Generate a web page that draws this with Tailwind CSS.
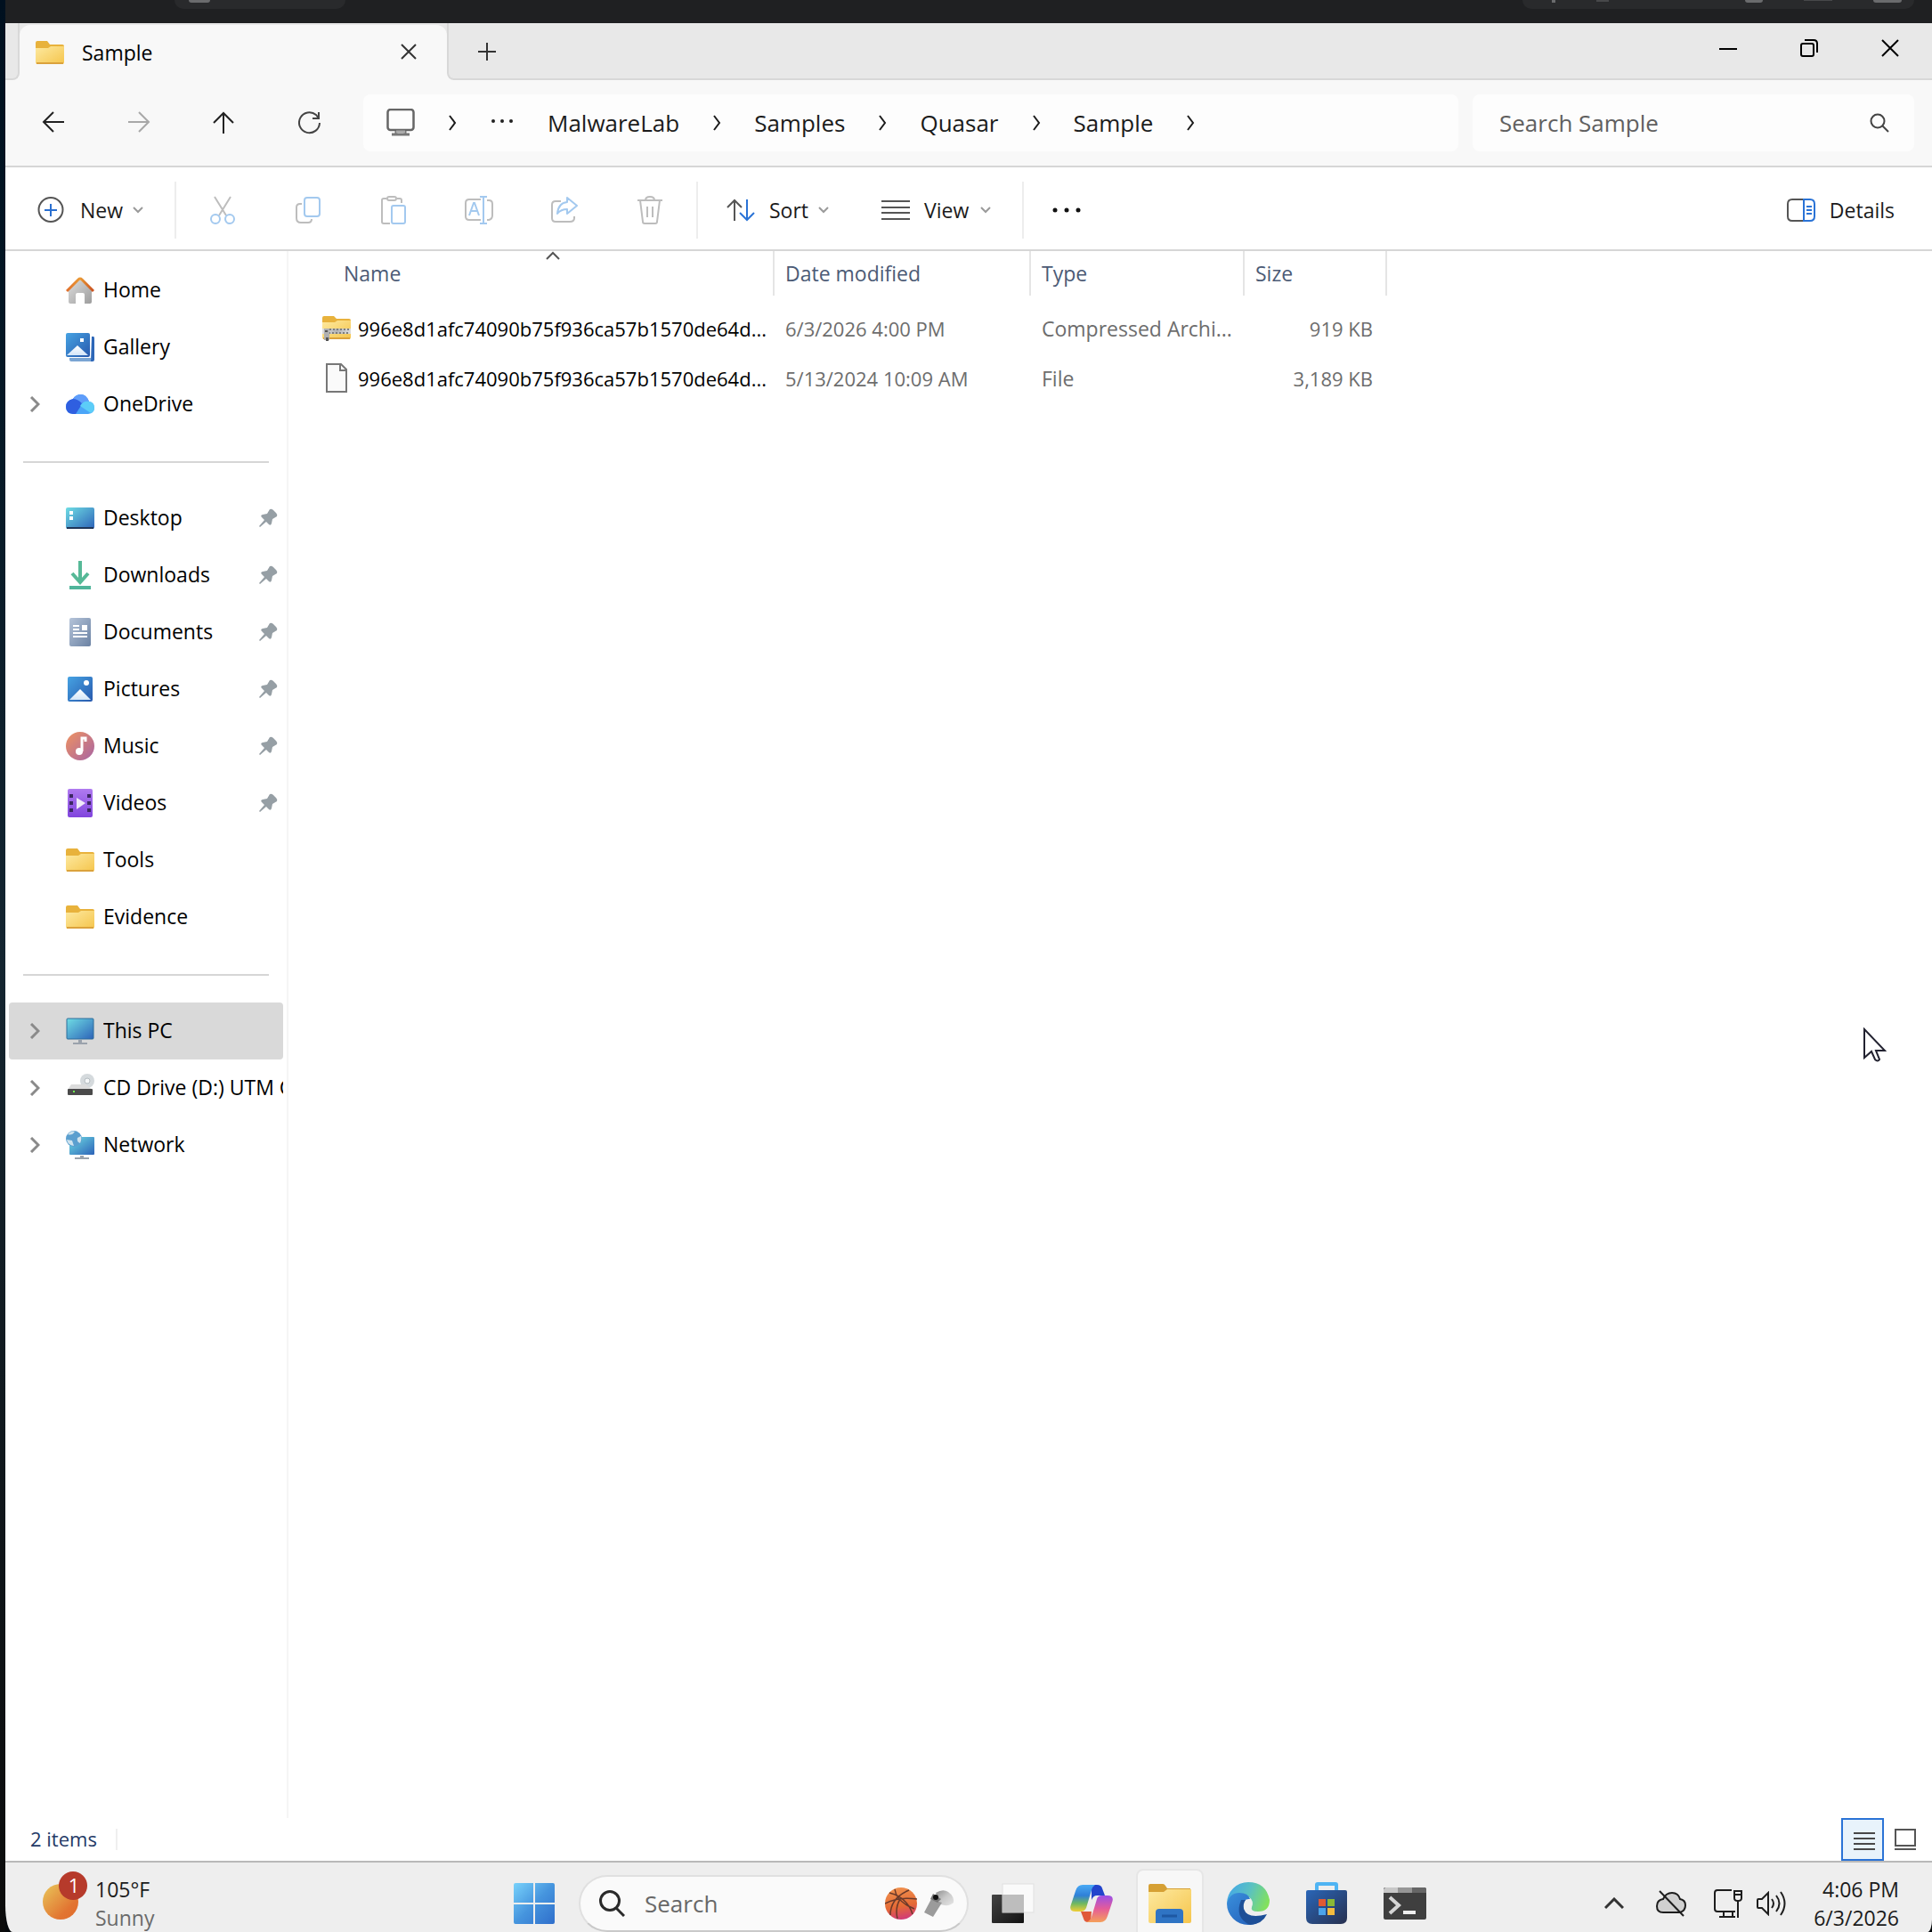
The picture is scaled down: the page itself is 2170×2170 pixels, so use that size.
<!DOCTYPE html>
<html lang="en">
<head>
<meta charset="utf-8">
<meta name="viewport" content="width=device-width, initial-scale=1">
<title>Sample - File Explorer</title>
<script src="https://cdn.jsdelivr.net/npm/@tailwindcss/browser@4"></script>
</head>
<body class="flex h-screen w-full overflow-hidden bg-[#05080b] font-['Open_Sans','Noto_Sans',sans-serif] text-[23px] leading-8 text-black">

<!-- Shared gradients and symbols -->
<svg class="absolute size-0" aria-hidden="true">
  <defs>
    <linearGradient id="gFolder" x1="0" y1="0" x2="1" y2="1"><stop offset="0" stop-color="#fde9a0"/><stop offset="1" stop-color="#f5c54c"/></linearGradient>
    <linearGradient id="gBlue" x1="0" y1="0" x2="1" y2="1"><stop offset="0" stop-color="#46a3e3"/><stop offset="1" stop-color="#2859ad"/></linearGradient>
    <linearGradient id="gTeal" x1="0" y1="0" x2="1" y2="1"><stop offset="0" stop-color="#6fdde4"/><stop offset="1" stop-color="#2d63b8"/></linearGradient>
    <linearGradient id="gGreen" x1="0" y1="0" x2="1" y2="1"><stop offset="0" stop-color="#6fd195"/><stop offset="1" stop-color="#3a9c9e"/></linearGradient>
    <linearGradient id="gDoc" x1="0" y1="0" x2="1" y2="1"><stop offset="0" stop-color="#b5c4d9"/><stop offset="1" stop-color="#6b82a3"/></linearGradient>
    <linearGradient id="gMusic" x1="0" y1="0" x2="1" y2="1"><stop offset="0" stop-color="#ef9360"/><stop offset="1" stop-color="#a764a4"/></linearGradient>
    <linearGradient id="gVideo" x1="0" y1="0" x2="0" y2="1"><stop offset="0" stop-color="#b07bf0"/><stop offset="1" stop-color="#8044dd"/></linearGradient>
    <linearGradient id="gHome" x1="0" y1="0" x2="1" y2="1"><stop offset="0" stop-color="#dedede"/><stop offset="1" stop-color="#9d9d9d"/></linearGradient>
    <linearGradient id="gRoof" x1="0" y1="0" x2="1" y2="0"><stop offset="0" stop-color="#e06f2b"/><stop offset=".5" stop-color="#ea9a35"/><stop offset="1" stop-color="#c94f1f"/></linearGradient>
    <linearGradient id="gHill" x1="0" y1="0" x2="0" y2="1"><stop offset="0" stop-color="#fff"/><stop offset="1" stop-color="#d4e6f8"/></linearGradient>
    <linearGradient id="gStart" gradientUnits="userSpaceOnUse" x1="0" y1="0" x2="46" y2="46"><stop offset="0" stop-color="#78d2fb"/><stop offset=".5" stop-color="#4695de"/><stop offset="1" stop-color="#2f6ecb"/></linearGradient>
    <linearGradient id="gSun" x1="0" y1="0" x2="1" y2="1"><stop offset="0" stop-color="#e9c75a"/><stop offset=".7" stop-color="#e27532"/><stop offset="1" stop-color="#e06a2b"/></linearGradient>
    <linearGradient id="gSilver" x1="0" y1="0" x2="1" y2="0"><stop offset="0" stop-color="#e0e0e0"/><stop offset=".5" stop-color="#b4b4b4"/><stop offset="1" stop-color="#dcdcdc"/></linearGradient>
  </defs>
  <symbol id="chev" viewBox="0 0 10 18"><path d="M2 1l6 8-6 8" fill="none" stroke="currentColor" stroke-width="2"/></symbol>
  <symbol id="expand" viewBox="0 0 12 18"><path d="M2 1l8 8-8 8" fill="none" stroke="currentColor" stroke-width="3"/></symbol>
  <symbol id="down" viewBox="0 0 14 10"><path d="M2 2l5 5 5-5" fill="none" stroke="#9a9a9a" stroke-width="2"/></symbol>
  <symbol id="folder" viewBox="0 0 32 26"><path d="M0 2q0-2 2-2h11l3 4h14q2 0 2 2v8H0z" fill="#e8b23c"/><path d="M0 8h14l3-2h15v18q0 2-2 2H2q-2 0-2-2z" fill="url(#gFolder)"/><path d="M1 25h30" stroke="#dba23c" stroke-width="2"/></symbol>
  <symbol id="pin" viewBox="0 0 22 22"><path d="M13 1q2-1 4 1l3 3q2 2 1 4l-5 3-1 5q-1 3-3 1l-3-3-7 6-1-1 6-7-3-3q-2-2 1-3l5-1z" fill="#969fa5"/></symbol>
  <symbol id="rows" viewBox="0 0 24 22"><path d="M0 2h24M0 8h24M0 14h24M0 20h24" stroke="#484848" stroke-width="2"/></symbol>
</svg>

<div class="w-[6px] shrink-0 bg-linear-to-b from-[#00101f] via-[#142530] to-[#0b0b0b]"></div>

<div class="flex min-w-0 flex-1 flex-col">

  <!-- Browser chrome behind the window -->
  <div class="flex h-[26px] shrink-0 items-start justify-between bg-[#1f2022] pr-5 pl-[190px]">
    <div class="h-[10px] w-[192px] rounded-b-xl bg-[#292a2c] pl-[16px]"><div class="h-[3px] w-[24px] rounded-b-full bg-[#6a6b6d]"></div></div>
    <div class="flex h-[10px] w-[440px] justify-between rounded-b-xl bg-[#292a2c] pr-[14px] pl-[33px]">
      <i class="h-[3px] w-[4px] bg-[#6a6b6d]"></i><i class="h-[2px] w-[14px] bg-[#47484a]"></i><i class="w-[60px]"></i><i class="h-[3px] w-[20px] rounded-b-full bg-[#6a6b6d]"></i><i class="h-px w-[32px] bg-[#47484a]"></i><i class="h-[3px] w-[32px] rounded-b bg-[#6a6b6d]"></i>
    </div>
  </div>

  <!-- Tab strip -->
  <header class="flex h-[64px] shrink-0 bg-[#f8f8f8]">
    <div class="w-[16px] rounded-br-lg border-r-2 border-b-2 border-[#d8d8d8] bg-[#e8e8e8]"></div>
    <div class="w-[480px] bg-[#e8e8e8]">
      <div class="mt-[2px] flex h-[62px] items-center rounded-t-xl bg-[#f8f8f8] pr-[33px] pl-[18px]">
        <svg class="h-[26px] w-[32px]"><use href="#folder"/></svg>
        <span class="ml-5 flex-1">Sample</span>
        <button aria-label="Close tab"><svg class="size-[20px]" viewBox="0 0 20 20"><path d="M2 1l16 16M18 1L2 17" stroke="#333" stroke-width="2"/></svg></button>
      </div>
    </div>
    <div class="flex flex-1 items-center rounded-bl-lg border-b-2 border-l-2 border-[#d8d8d8] bg-[#e8e8e8] pt-[2px]">
      <button class="ml-[32px]" aria-label="New tab"><svg class="size-[22px]" viewBox="0 0 22 22"><path d="M11 1v20M1 11h20" stroke="#333" stroke-width="2"/></svg></button>
      <div class="mr-[2px] ml-auto flex h-[52px] self-start text-black">
        <button class="grid w-[91px] place-items-center" aria-label="Minimize"><svg class="size-[20px]" viewBox="0 0 20 20"><path d="M0 11h20" stroke="currentColor" stroke-width="2"/></svg></button>
        <button class="grid w-[91px] place-items-center" aria-label="Restore"><svg class="size-[20px]" viewBox="0 0 20 20" fill="none" stroke="currentColor" stroke-width="2"><rect x="1" y="5" width="14" height="14" rx="2"/><path d="M5 1h10q4 0 4 4v10"/></svg></button>
        <button class="grid w-[91px] place-items-center" aria-label="Close"><svg class="size-[20px]" viewBox="0 0 20 20"><path d="M1 1l18 18M19 1L1 19" stroke="currentColor" stroke-width="2"/></svg></button>
      </div>
    </div>
  </header>

  <!-- Navigation and address -->
  <nav class="flex h-[98px] shrink-0 items-center border-b-2 border-[#d6d6d6] bg-[#f8f8f8] pr-5 pl-[6px] text-[26px] text-[#1b1b1b]">
    <button class="grid h-16 w-24 place-items-center" aria-label="Back"><svg class="size-[26px]" viewBox="0 0 26 26" fill="none" stroke="#222" stroke-width="2"><path d="M25 12H2M13 1L2 12l11 11"/></svg></button>
    <button class="grid h-16 w-24 place-items-center" aria-label="Forward"><svg class="size-[26px]" viewBox="0 0 26 26" fill="none" stroke="#a8a8a8" stroke-width="2"><path d="M1 12h23M13 1l11 11-11 11"/></svg></button>
    <button class="grid h-16 w-24 place-items-center" aria-label="Up"><svg class="size-[26px]" viewBox="0 0 26 26" fill="none" stroke="#222" stroke-width="2"><path d="M12 25V2M1 13L12 2l11 11"/></svg></button>
    <button class="grid h-16 w-24 place-items-center" aria-label="Refresh"><svg class="size-[26px]" viewBox="0 0 26 26" fill="none" stroke="#444" stroke-width="2"><path d="M24 13A11.500 11.500 0 1 1 20 4l3 4M23 1v7h-7"/></svg></button>
    <div class="ml-3 flex h-16 min-w-0 flex-1 items-center gap-[37px] rounded-lg bg-[#fdfdfd] pl-[26px]">
      <svg class="h-[32px] w-[32px]" viewBox="0 0 32 32"><rect x="1.500" y="1" width="29" height="23" rx="3" fill="none" stroke="#666" stroke-width="2.500"/><path d="M11 25v4M21 25v4M6 29h20" stroke="#777" stroke-width="3"/><path d="M11 26h10" stroke="#aaa" stroke-width="3"/></svg>
      <svg class="h-[18px] w-[10px]"><use href="#chev"/></svg>
      <button class="grid w-[28px] place-items-center pb-1" aria-label="More folders"><svg class="h-[4px] w-[24px]" viewBox="0 0 24 4" fill="#222"><circle cx="2" cy="2" r="2"/><circle cx="12" cy="2" r="2"/><circle cx="22" cy="2" r="2"/></svg></button>
      <a href="#malwarelab">MalwareLab</a><svg class="h-[18px] w-[10px]"><use href="#chev"/></svg>
      <a href="#samples">Samples</a><svg class="h-[18px] w-[10px]"><use href="#chev"/></svg>
      <a href="#quasar">Quasar</a><svg class="h-[18px] w-[10px]"><use href="#chev"/></svg>
      <a href="#sample">Sample</a><svg class="h-[18px] w-[10px]"><use href="#chev"/></svg>
    </div>
    <label class="ml-4 flex h-16 w-[496px] items-center rounded-lg bg-[#fdfdfd] pr-[28px] pl-[30px]">
      <input class="min-w-0 flex-1 bg-transparent outline-none placeholder:text-[#606060]" type="text" placeholder="Search Sample" aria-label="Search Sample">
      <svg class="size-[22px]" viewBox="0 0 22 22" fill="none" stroke="#444" stroke-width="2"><circle cx="9" cy="9" r="7.500"/><path d="M14 14l7 7"/></svg>
    </label>
  </nav>

  <!-- Command bar -->
  <div class="flex h-[94px] shrink-0 items-center border-b-2 border-[#d6d6d6] bg-white pt-1 text-[#1b1b1b]">
    <button class="flex w-[190px] items-center pl-[36px]">
      <svg class="size-[30px]" viewBox="0 0 30 30" fill="none"><circle cx="15" cy="14.500" r="13.500" stroke="#555" stroke-width="2"/><path d="M15 8v14M8 15h14" stroke="#2a6fd0" stroke-width="2"/></svg>
      <span class="ml-[18px]">New</span><svg class="ml-[10px] h-[10px] w-[14px]"><use href="#down"/></svg>
    </button>
    <i class="mr-1 h-16 w-[2px] bg-[#ededed]"></i>
    <button class="grid w-24 place-items-center" aria-label="Cut"><svg class="h-[32px] w-[28px]" viewBox="0 0 28 32" fill="none" stroke-width="2"><path d="M5 1l13 21M23 1L10 22" stroke="#bdbdbd"/><circle cx="6" cy="26" r="5" stroke="#a3c9ef"/><circle cx="22" cy="26" r="5" stroke="#a3c9ef"/></svg></button>
    <button class="grid w-24 place-items-center" aria-label="Copy"><svg class="h-[30px] w-[28px]" viewBox="0 0 28 30" fill="none" stroke-width="2"><path d="M7 8H5Q1 8 1 12v12q0 5 5 5h8q4 0 4-4" stroke="#bdbdbd"/><rect x="10" y="1" width="17" height="21" rx="3" stroke="#a3c9ef"/></svg></button>
    <button class="grid w-24 place-items-center" aria-label="Paste"><svg class="h-[32px] w-[28px]" viewBox="0 0 28 32" fill="none" stroke-width="2"><path d="M10 31H3q-2 0-2-2V5q0-2 2-2h3M18 3h3q2 0 2 2v3" stroke="#bdbdbd"/><rect x="7" y="1" width="10" height="4" rx="2" stroke="#bdbdbd"/><rect x="12" y="11" width="15" height="20" rx="2" stroke="#a3c9ef"/></svg></button>
    <button class="grid w-24 place-items-center" aria-label="Rename"><svg class="h-[32px] w-[32px]" viewBox="0 0 32 32" fill="none" stroke-width="2"><path d="M18 4H5Q1 4 1 8v15q0 4 4 4h13M25 5h2q4 0 4 4v13q0 4-4 5h-2" stroke="#bdbdbd"/><path d="M21 1v30M17 1h8M17 31h8M5 22l5-14h1l5 14M7 17h7" stroke="#a3c9ef"/></svg></button>
    <button class="grid w-24 place-items-center" aria-label="Share"><svg class="h-[30px] w-[30px]" viewBox="0 0 30 30" fill="none" stroke-width="2" stroke-linejoin="round"><path d="M11 5H5Q1 5 1 9v15q0 4 4 4h16q5 0 5-4v-2" stroke="#bdbdbd"/><path d="M18 1l11 9-11 9v-5q-7 0-11 5 1-12 11-13z" stroke="#a3c9ef"/></svg></button>
    <button class="grid w-24 place-items-center" aria-label="Delete"><svg class="h-[32px] w-[28px]" viewBox="0 0 28 32" fill="none" stroke="#bdbdbd" stroke-width="2"><path d="M0 5h28M9 5q0-4 5-4t5 4M3 5l3 24q0 2 2 2h12q2 0 2-2l3-24M11 12v12M17 12v12"/></svg></button>
    <i class="ml-1 h-16 w-[2px] bg-[#ededed]"></i>
    <button class="flex w-[174px] items-center pl-[32px]">
      <svg class="h-[26px] w-[32px]" viewBox="0 0 32 26" fill="none" stroke-width="2"><path d="M9 25V2M1 10l8-8 8 8" stroke="#555"/><path d="M23 1v23M15 16l8 8 8-8" stroke="#2a73d6"/></svg>
      <span class="ml-4">Sort</span><svg class="ml-[10px] h-[10px] w-[14px]"><use href="#down"/></svg>
    </button>
    <button class="flex w-[190px] items-center pl-[32px]">
      <svg class="h-[22px] w-[32px]" viewBox="0 0 32 22"><path d="M0 1h32M0 8h32M0 14h32M0 21h32" stroke="#555" stroke-width="2"/></svg>
      <span class="ml-4">View</span><svg class="ml-3 h-[10px] w-[14px]"><use href="#down"/></svg>
    </button>
    <i class="h-16 w-[2px] bg-[#ededed]"></i>
    <button class="grid w-24 place-items-center" aria-label="See more"><svg class="h-[6px] w-[32px]" viewBox="0 0 32 6" fill="#111"><circle cx="3" cy="3" r="2.500"/><circle cx="16" cy="3" r="2.500"/><circle cx="29" cy="3" r="2.500"/></svg></button>
    <button class="mr-[42px] ml-auto flex items-center gap-4">
      <svg class="h-[26px] w-[32px]" viewBox="0 0 32 26" fill="none" stroke-width="2"><path d="M19 1H6Q1 1 1 6v14q0 5 5 5h13" stroke="#555"/><path d="M19 1h7q5 0 5 5v14q0 5-5 5h-7zM22 9h6M22 13h6M22 17h6" stroke="#2a73d6"/></svg>
      Details
    </button>
  </div>

  <!-- Body -->
  <div class="flex min-h-0 flex-1 bg-white">
    <aside class="w-[318px] shrink-0 border-r-2 border-[#f5f5f5] pt-3 pr-1 pl-1">
      <ul id="quick"></ul>
    </aside>
    <main class="min-w-0 flex-1">
      <table class="w-[1234px] table-fixed border-collapse text-left">
        <colgroup><col class="w-[546px]"><col class="w-[288px]"><col class="w-[240px]"><col class="w-[160px]"></colgroup>
        <thead class="text-[#4c5b76]">
          <tr>
            <th class="h-[59px] p-0 align-top font-normal"><div class="relative flex h-[50px] items-center border-r-2 border-[#e5e5e5] pl-[62px]">Name<svg class="absolute top-0 left-[289px] h-[10px] w-[16px]" viewBox="0 0 16 10"><path d="M1 9l7-7 7 7" fill="none" stroke="#555" stroke-width="2"/></svg></div></th>
            <th class="h-[59px] p-0 align-top font-normal"><div class="flex h-[50px] items-center border-r-2 border-[#e5e5e5] pl-3">Date modified</div></th>
            <th class="h-[59px] p-0 align-top font-normal"><div class="flex h-[50px] items-center border-r-2 border-[#e5e5e5] pl-3">Type</div></th>
            <th class="h-[59px] p-0 align-top font-normal"><div class="flex h-[50px] items-center border-r-2 border-[#e5e5e5] pl-3">Size</div></th>
          </tr>
        </thead>
        <tbody class="text-[22px] text-[#6d6d6d]">
          <tr class="h-[56px]">
            <td class="p-0"><div class="flex items-center gap-2 pl-[38px] whitespace-nowrap text-black"><svg class="h-[32px] w-[32px] shrink-0" viewBox="0 0 32 32"><path d="M0 4q0-2 2-2h11l3 3h14q2 0 2 2v8H0z" fill="#e8b23c"/><path d="M0 9h14l3-2h15v19q0 2-2 2H2q-2 0-2-2z" fill="url(#gFolder)"/><path d="M1 27h30" stroke="#dba23c" stroke-width="2"/><path d="M0 16h32v6H0z" fill="url(#gSilver)"/><path d="M8 17h24M7 21h24" stroke="#7d7d7d" stroke-width="2" stroke-dasharray="2 2"/><path d="M2 16h6v13H2z" fill="#b0b0b0"/><path d="M3 18h3v2H3zM4 26h3v4H4z" fill="#555"/></svg>996e8d1afc74090b75f936ca57b1570de64d...</div></td>
            <td class="p-0 pl-3">6/3/2026 4:00 PM</td><td class="p-0 pl-3 text-[23px] whitespace-nowrap">Compressed Archi...</td><td class="p-0 pr-4 text-right">919 KB</td>
          </tr>
          <tr class="h-[56px]">
            <td class="p-0"><div class="flex items-center gap-2 pl-[38px] whitespace-nowrap text-black"><svg class="h-[34px] w-[32px] shrink-0" viewBox="0 0 32 34" fill="#fafafa" stroke="#777" stroke-width="2"><path d="M5 1h16l6 6v25H5zM20 1v7h7"/></svg>996e8d1afc74090b75f936ca57b1570de64d...</div></td>
            <td class="p-0 pl-3">5/13/2024 10:09 AM</td><td class="p-0 pl-3 text-[23px]">File</td><td class="p-0 pr-4 text-right">3,189 KB</td>
          </tr>
        </tbody>
      </table>
    </main>
  </div>

  <!-- Status bar -->
  <footer class="flex h-12 shrink-0 items-center bg-white pr-[18px] pl-[28px] text-[22px] text-[#243a66]">
    <span class="pb-[2px]">2 items</span><i class="ml-[21px] h-6 w-[2px] bg-[#efefef]"></i>
    <button class="ml-auto grid size-12 place-items-center border-2 border-[#2a73d6] bg-[#e8f3fb] pt-[4px] pl-1" aria-label="Details view"><svg class="h-[22px] w-[24px]"><use href="#rows"/></svg></button>
    <button class="ml-3" aria-label="Large icons view"><svg class="size-[24px]" viewBox="0 0 24 24" fill="none" stroke="#555" stroke-width="2"><path d="M1 1h22v18H1zM0 23h24"/></svg></button>
  </footer>

  <!-- Taskbar -->
  <div class="h-[80px] shrink-0 overflow-hidden rounded-br-[5px_14px] rounded-bl-[8px_30px] border-t-2 border-[#b9b9b9] bg-[#eeeeee]">
    <div class="grid h-[92px] grid-cols-[1fr_auto_1fr] items-center pl-[2px]">
      <button class="flex items-center gap-[7px] pl-[38px] text-left">
        <svg class="h-[76px] w-[54px]" viewBox="0 0 54 76"><circle cx="22" cy="36" r="20" fill="url(#gSun)"/><circle cx="36" cy="18" r="16" fill="#b63a2b"/><text x="37" y="26" text-anchor="middle" font-size="22" fill="#fff">1</text></svg>
        <span class="flex flex-col text-[#1b1b1b]"><span>105°F</span><span class="text-[#6a6a6a]">Sunny</span></span>
      </button>
      <div class="flex items-center">
        <button class="grid w-[88px] place-items-center" aria-label="Start"><svg class="size-[46px]" viewBox="0 0 46 46" fill="url(#gStart)"><path d="M2 0h20v22H0V2q0-2 2-2zM24 0h20q2 0 2 2v20H24zM0 24h22v22H2q-2 0-2-2zM24 24h22v20q0 2-2 2H24z"/></svg></button>
        <label class="mx-[6px] flex h-[64px] w-[438px] items-center rounded-full border-2 border-[#e0e0e0] border-b-[#c9c9c9] bg-[#fafafa] pr-[14px] pl-[20px] text-[26px]">
          <svg class="size-[30px]" viewBox="0 0 30 30" fill="none" stroke="#2a2a2a" stroke-width="3"><circle cx="13" cy="12" r="10.500"/><path d="M20 20l9 9"/></svg>
          <input class="ml-[22px] w-0 flex-1 bg-transparent outline-none placeholder:text-[#686868]" type="text" placeholder="Search" aria-label="Search">
          <svg class="size-[36px]" viewBox="0 0 36 36"><defs><linearGradient id="gBall" x1=".3" y1="0" x2=".5" y2="1"><stop offset="0" stop-color="#f0924f"/><stop offset=".6" stop-color="#e56a35"/><stop offset="1" stop-color="#d13b78"/></linearGradient></defs><circle cx="18" cy="18" r="18" fill="url(#gBall)"/><path d="M5 6q20 5 26 24M27 3Q6 12 6 31M0 18Q16 10 36 13M11 2q2 14 22 22M17 13q-6 10-3 22" fill="none" stroke="#6b3a2a" stroke-width="1.500"/></svg>
          <svg class="ml-[6px] h-[36px] w-[36px]" viewBox="0 0 36 36"><defs><linearGradient id="gWh" x1="0" y1="0" x2="1" y2="1"><stop offset="0" stop-color="#8f8f8f"/><stop offset=".5" stop-color="#c9c9c9"/><stop offset="1" stop-color="#e6e6e6"/></linearGradient></defs><path d="M15 6q8-5 14-1 7 5 6 12-5 5-15 2z" fill="url(#gWh)"/><path d="M10 13l12 4-10 16-10-5z" fill="#9b9b9b"/><path d="M12 7l9 6-4 4-8-4z" fill="#777"/><circle cx="15" cy="11" r="3" fill="#111"/></svg>
        </label>
        <button class="grid w-[88px] place-items-center" aria-label="Task view"><svg class="h-[46px] w-[48px]" viewBox="0 0 48 46"><defs><linearGradient id="gTv" x1="0" y1="0" x2="1" y2="1"><stop offset="0" stop-color="#444"/><stop offset="1" stop-color="#111"/></linearGradient></defs><rect y="13" width="36" height="32" rx="1" fill="url(#gTv)"/><rect x="12" y="1" width="35" height="32" fill="#fafafa" stroke="#e0e0e0"/><path d="M12 13h24v20H12z" fill="#bdbdbd"/></svg></button>
        <button class="grid w-[88px] place-items-center" aria-label="Copilot"><svg class="h-[44px] w-[48px]" viewBox="0 0 48 44"><defs><linearGradient id="gCa" x1="0" y1="0" x2="0" y2="1"><stop offset="0" stop-color="#4aaaf5"/><stop offset=".4" stop-color="#2f80d8"/><stop offset=".7" stop-color="#6fb860"/><stop offset="1" stop-color="#f2cf35"/></linearGradient><linearGradient id="gCb" x1="0" y1="0" x2="0" y2="1"><stop offset="0" stop-color="#9a4fe8"/><stop offset=".5" stop-color="#e55c98"/><stop offset="1" stop-color="#f5a05a"/></linearGradient></defs><path d="M24 1h6q5 0 6 4l3 8h-9q-4 0-6 5z" fill="#2244cc"/><path d="M12 31h12l-1 12h-3q-4 0-5-4z" fill="#e0593a"/><path d="M14 1h14q-3 2-4 6l-6 20q-2 4-6 4H6q-8 0-5-8L6 8q2-7 8-7z" fill="url(#gCa)"/><path d="M34 43H18q4-1 6-6l6-20q1-4 6-4h6q8 0 5 8l-5 15q-2 7-8 7z" fill="url(#gCb)"/></svg></button>
        <button class="mx-[6px] grid h-[78px] w-[76px] place-items-center rounded-lg border-2 border-[#e6e6e6] bg-[#f7f7f7]" aria-label="File Explorer"><svg class="h-[44px] w-[48px]" viewBox="0 0 48 44"><path d="M2 0h14q2 0 3 2l2 3h26v7H0V2q0-2 2-2z" fill="#d6a034"/><path d="M0 9h17l4-3h27v36q0 2-2 2H2q-2 0-2-2z" fill="url(#gFolder)"/><path d="M8 44V32q0-4 4-4h23q4 0 4 4v12z" fill="#2f74c4"/><path d="M15 36h17" stroke="#1e59a3" stroke-width="3"/></svg></button>
        <button class="grid w-[88px] place-items-center" aria-label="Edge"><svg class="size-[48px]" viewBox="0 0 48 48"><defs><linearGradient id="gEa" x1="0" y1=".3" x2="1" y2=".6"><stop offset="0" stop-color="#44a8e8"/><stop offset=".5" stop-color="#5bc2c0"/><stop offset="1" stop-color="#83e25a"/></linearGradient><linearGradient id="gEb" x1="0" y1="0" x2="1" y2="1"><stop offset="0" stop-color="#3a90dc"/><stop offset="1" stop-color="#2059b5"/></linearGradient></defs><path d="M0 24A24 24 0 0 1 24 0q20 0 24 20 0 13-13 13-9 0-7-5 3-7-4-12Q12 8 0 24z" fill="url(#gEa)"/><path d="M0 24Q3 12 14 12q10 0 12 7-8-1-8 9 2 14 24 11Q36 48 24 48A24 24 0 0 1 0 24z" fill="url(#gEb)"/><path d="M16 20q-8 20 10 28 14-1 19-12-22 6-26-6-1-6 2-10z" fill="#1d4f97"/></svg></button>
        <button class="grid w-[88px] place-items-center" aria-label="Store"><svg class="h-[48px] w-[46px]" viewBox="0 0 46 48"><defs><linearGradient id="gSt" x1="0" y1="0" x2="1" y2="1"><stop offset="0" stop-color="#2a66b8"/><stop offset="1" stop-color="#27304f"/></linearGradient></defs><path d="M12 12V3q0-1 1-1h20q1 0 1 1v9" fill="none" stroke="#4fb4f3" stroke-width="4"/><path d="M2 9h42q2 0 2 2v29q0 7-7 7H7q-7 0-7-7V11q0-2 2-2z" fill="url(#gSt)"/><path d="M14 19h8v8h-8z" fill="#e05a33"/><path d="M24 19h8v8h-8z" fill="#8ab836"/><path d="M14 29h8v8h-8z" fill="#4ba3ea"/><path d="M24 29h8v8h-8z" fill="#f3bb3f"/></svg></button>
        <button class="grid w-[88px] place-items-center" aria-label="Terminal"><svg class="h-[36px] w-[48px]" viewBox="0 0 48 36"><rect width="48" height="36" rx="2" fill="#3f3f3f"/><path d="M2 0h14v6H0V2z" fill="#c8c8c8"/><path d="M16 0h16v6H16z" fill="#969696"/><path d="M32 0h14l2 2v4H32z" fill="#666"/><path d="M7 11l10 9-10 9" fill="none" stroke="#d5d5d5" stroke-width="4"/><path d="M22 28h14" stroke="#eee" stroke-width="4"/></svg></button>
      </div>
      <div class="flex items-center justify-end pr-[37px] text-[#1b1b1b]">
        <button aria-label="Hidden icons"><svg class="h-[14px] w-[22px]" viewBox="0 0 22 14"><path d="M1 12l10-10 10 10" fill="none" stroke="#333" stroke-width="3"/></svg></button>
        <svg class="ml-[36px] h-[30px] w-[34px]" viewBox="0 0 34 30" fill="#d0d0d0" stroke="#1d1d1d" stroke-width="2"><path d="M8 25q-7 0-7-7t7-8q3-7 10-7t9 7q6 1 6 7t-6 8z"/><path d="M4 1l27 28"/></svg>
        <svg class="ml-[31px] h-[32px] w-[32px]" viewBox="0 0 32 32" fill="none" stroke="#1d1d1d" stroke-width="2"><path d="M20 1H4Q1 1 1 4v18q0 3 3 3h20M11 26v5M21 26v5M6 31h18M27 13v19"/><path d="M23 2h8v8q0 3-4 3t-4-3zM23 6h8"/></svg>
        <svg class="ml-4 h-[28px] w-[34px]" viewBox="0 0 34 28" fill="none" stroke="#1d1d1d" stroke-width="2"><path d="M1 10q0-1 1-1h4l7-7v24l-7-7H2q-1 0-1-1zM17 9q4 5 0 10M22 5q7 9 0 18M27 1q9 13 0 26"/></svg>
        <div class="ml-[30px] flex flex-col text-right"><span>4:06 PM</span><span>6/3/2026</span></div>
      </div>
    </div>
  </div>
</div>

<!-- Mouse pointer -->
<svg class="absolute top-[1154px] left-[2093px] h-[40px] w-[26px]" viewBox="0 0 26 40"><path d="M1 2v32l8-7 4 9q3 3 5 0l-4-10h10z" fill="#fff" stroke="#222230" stroke-width="2"/></svg>

<script>
const icons = {
  home: '<path d="M3 14L16 4l13 10v15q0 2-2 2h-6V21q0-2-2-2h-6q-2 0-2 2v10H5q-2 0-2-2z" fill="url(#gHome)"/><path d="M1 17L14 4q2-2 4 0l13 13" fill="none" stroke="url(#gRoof)" stroke-width="3"/>',
  gallery: '<path d="M29 4h2q1 0 1 2v24q0 2-2 2h-2z" fill="#2d67b8"/><path d="M4 28h24v4H6q-2 0-2-2z" fill="#7aa5d3"/><rect width="27" height="27" rx="2" fill="url(#gBlue)"/><path d="M1 25l12-11 12 11z" fill="url(#gHill)"/><path d="M16 6h4v4h-4z" fill="#fff"/>',
  onedrive: '<path d="M8 27q-8-1-8-8t8-9q3-5 9-5t9 8q6 1 6 7t-7 7z" fill="#4aa5f8"/><path d="M8 27q-8-1-8-8t8-9l2-2q6 2 10 5L11 27z" fill="#2f5fe0"/><path d="M8 10q3-5 9-5t9 8q-5-1-8 2-5-5-10-5z" fill="#5f9dfa"/><path d="M26 13q6 1 6 7 0 4-4 6l-12-8q3-6 10-5z" fill="#5ccdf8"/>',
  desktop: '<rect y="4" width="32" height="24" rx="2" fill="url(#gTeal)"/><path d="M1 27h30" stroke="#1f3558" stroke-width="2"/><path d="M4 8h4v4H4zM4 14h4v4H4z" fill="#fff"/>',
  downloads: '<path d="M16 0v24M7 14l9 10 9-10" fill="none" stroke="#56b997" stroke-width="4"/><path d="M4 30h24" stroke="#50b59b" stroke-width="4"/>',
  documents: '<rect x="4" width="24" height="32" rx="2" fill="url(#gDoc)"/><path d="M8 9h7M8 13h7M8 17h16M8 21h16" stroke="#fff" stroke-width="2"/><path d="M18 8h6v6h-6z" fill="#fff"/>',
  pictures: '<rect x="2" y="2" width="28" height="28" rx="2" fill="url(#gBlue)"/><path d="M4 28l12-12 12 12z" fill="url(#gHill)"/><circle cx="23" cy="9" r="3" fill="#fff"/>',
  music: '<circle cx="16" cy="16" r="16" fill="url(#gMusic)"/><circle cx="15" cy="22" r="4" fill="#fff"/><path d="M18 22V7h4v4" fill="none" stroke="#fff" stroke-width="3"/>',
  videos: '<rect x="2" width="28" height="32" rx="2" fill="url(#gVideo)"/><path d="M4 6h4v4H4zM4 14h4v4H4zM4 22h4v4H4zM24 6h4v4h-4zM24 14h4v4h-4zM24 22h4v4h-4z" fill="#3c2763"/><path d="M12 10l10 6-10 7z" fill="#f0eaf8"/>',
  folder: '<path d="M0 5q0-2 2-2h11l3 4h14q2 0 2 2v8H0z" fill="#e8b23c"/><path d="M0 11h14l3-2h15v18q0 2-2 2H2q-2 0-2-2z" fill="url(#gFolder)"/><path d="M1 28h30" stroke="#dba23c" stroke-width="2"/>',
  pc: '<path d="M14 26h4v4h-4z" fill="#9aa2ac"/><path d="M8 30h16" stroke="#9aa2ac" stroke-width="2"/><rect x="1" y="2" width="30" height="23" rx="1" fill="url(#gTeal)" stroke="#2c6c9a" stroke-width="1"/>',
  cd: '<circle cx="24" cy="8" r="8" fill="#d5dadd"/><circle cx="24" cy="8" r="3" fill="#f5f7f8" stroke="#b5bcc0"/><path d="M6 12h16l8 6H2z" fill="#dcdcdc"/><rect x="2" y="17" width="28" height="7" rx="1" fill="#4a4a4a"/><path d="M8 19h2v2H8z" fill="#6ef04e"/>',
  network: '<path d="M16 28h4v3h-4z" fill="#9aa2ac"/><path d="M10 31h16" stroke="#9aa2ac" stroke-width="2"/><rect x="4" y="7" width="28" height="20" rx="1" fill="url(#gTeal)"/><circle cx="9" cy="9" r="9" fill="#5b9fcf"/><path d="M2 4q5-5 8-3-3 5-8 3zM1 10l6 1 2 6q-7-1-8-7zM13 8l4-2q1 4-1 8-4-1-3-6z" fill="#cfe3ee"/>'
};
// [label, icon, expandable, pinned, selected]; null draws a divider
const items = [
  ['Home','home'],['Gallery','gallery'],['OneDrive','onedrive',1],null,
  ['Desktop','desktop',0,1],['Downloads','downloads',0,1],['Documents','documents',0,1],['Pictures','pictures',0,1],['Music','music',0,1],['Videos','videos',0,1],['Tools','folder'],['Evidence','folder'],null,
  ['This PC','pc',1,0,1],['CD Drive (D:) UTM Guest Tools','cd',1],['Network','network',1]
];
document.getElementById('quick').innerHTML = items.map(r => r === null
  ? '<li class="flex h-16 items-center px-4 pt-[2px]"><hr class="w-full border-t-2 border-[#d6d6d6]"></li>'
  : `<li><a href="#" class="flex h-16 items-center overflow-hidden rounded whitespace-nowrap ${r[4] ? 'bg-[#d9d9d9]' : ''}">
      <span class="grid w-[58px] shrink-0 place-items-center text-[#8a8a8a]">${r[2] ? '<svg class="h-[18px] w-[12px]"><use href="#expand"/></svg>' : ''}</span>
      <svg class="ml-[6px] size-[32px] shrink-0" viewBox="0 0 32 32">${icons[r[1]]}</svg>
      <span class="ml-[10px] flex-1 overflow-hidden pb-[2px]">${r[0]}</span>
      ${r[3] ? '<svg class="mr-[6px] size-[22px] shrink-0"><use href="#pin"/></svg>' : ''}</a></li>`).join('');
</script>
</body>
</html>
